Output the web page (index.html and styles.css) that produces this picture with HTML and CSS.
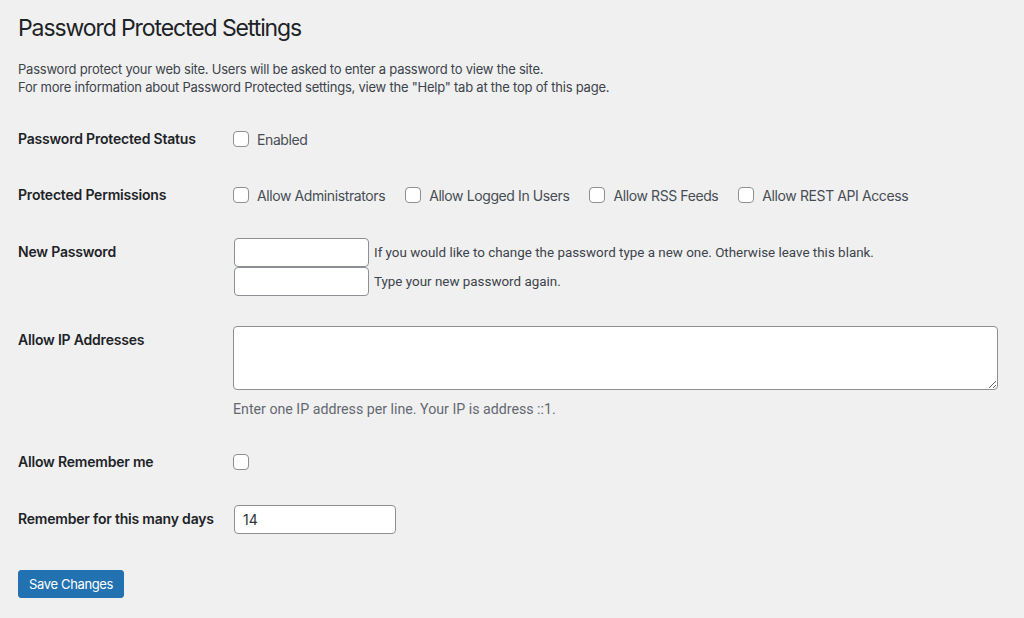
FILE: index.html
```html
<!DOCTYPE html>
<html lang="en">
<head>
<meta charset="utf-8">
<title>Password Protected Settings</title>
<link rel="stylesheet" href="styles.css">
</head>
<body>
<div class="wrap">
  <h1 class="page-title">Password Protected Settings</h1>
  <p class="intro">Password protect your web site. Users will be asked to enter a password to view the site.<br>For more information about Password Protected settings, view the "Help" tab at the top of this page.</p>

  <form class="settings">
    <div class="row row--check">
      <div class="row-label">Password Protected Status</div>
      <div class="row-field">
        <label class="check"><input type="checkbox" class="checkbox"><span>Enabled</span></label>
      </div>
    </div>

    <div class="row row--check">
      <div class="row-label">Protected Permissions</div>
      <div class="row-field checks">
        <label class="check"><input type="checkbox" class="checkbox"><span>Allow Administrators</span></label>
        <label class="check"><input type="checkbox" class="checkbox"><span>Allow Logged In Users</span></label>
        <label class="check"><input type="checkbox" class="checkbox"><span>Allow RSS Feeds</span></label>
        <label class="check"><input type="checkbox" class="checkbox"><span>Allow REST API Access</span></label>
      </div>
    </div>

    <div class="row">
      <div class="row-label">New Password</div>
      <div class="row-field stack">
        <div class="pass-line"><input type="password" class="text-input pass-input"><span class="hint">If you would like to change the password type a new one. Otherwise leave this blank.</span></div>
        <div class="pass-line"><input type="password" class="text-input pass-input"><span class="hint">Type your new password again.</span></div>
      </div>
    </div>

    <div class="row">
      <div class="row-label">Allow IP Addresses</div>
      <div class="row-field stack">
        <textarea class="ip-list"></textarea>
        <p class="description">Enter one IP address per line. Your IP is address ::1.</p>
      </div>
    </div>

    <div class="row row--check">
      <div class="row-label">Allow Remember me</div>
      <div class="row-field">
        <label class="check"><input type="checkbox" class="checkbox"></label>
      </div>
    </div>

    <div class="row">
      <div class="row-label">Remember for this many days</div>
      <div class="row-field">
        <input type="text" class="text-input days-input" value="14">
      </div>
    </div>

    <div class="actions">
      <button type="button" class="button-primary">Save Changes</button>
    </div>
  </form>
</div>
</body>
</html>
```

FILE: styles.css
```css
html, body {
  margin: 0;
  padding: 0;
  background: #f0f0f1;
}

body {
  font-family: Inter, "Open Sans", sans-serif;
  color: #1d2327;
  font-size: 13px;
}

.wrap {
  padding: 14px 18px 0;
}

.page-title {
  margin: 0;
  font-size: 23px;
  font-weight: 400;
  line-height: 29px;
  letter-spacing: -1.1px;
  color: #1d2327;
}

.intro {
  margin: 17px 0 0;
  font-size: 13px;
  line-height: 18px;
  letter-spacing: -0.23px;
  color: #3c434a;
}

.settings {
  display: flex;
  flex-direction: column;
  gap: 30px;
  margin-top: 30px;
}

.row {
  display: grid;
  grid-template-columns: 216px 1fr;
  align-items: start;
}

.row-label {
  font-size: 14px;
  font-weight: 600;
  line-height: 20px;
  letter-spacing: -0.2px;
  padding-top: 4px;
  color: #1d2327;
}

.row--check .row-label {
  padding-top: 3px;
}

.row-field {
  min-width: 0;
}

.checks {
  display: flex;
  gap: 21px;
}

.check {
  display: flex;
  align-items: center;
  height: 26px;
  gap: 8px;
  font-size: 14px;
  letter-spacing: -0.4px;
  color: #474d54;
}

.checkbox {
  appearance: none;
  -webkit-appearance: none;
  margin: 0;
  width: 16px;
  height: 16px;
  border: 1px solid #8c8f94;
  border-radius: 4px;
  background: #fff;
  box-sizing: border-box;
}

.checks .check:first-child .checkbox,
.row--check .row-field > .check .checkbox {
  margin-left: -1px;
}

.stack {
  display: flex;
  flex-direction: column;
}

.pass-line {
  display: flex;
  align-items: center;
  gap: 5px;
}

.text-input {
  box-sizing: border-box;
  height: 29px;
  margin: 0;
  padding: 0 8px;
  border: 1px solid #8c8f94;
  border-radius: 4px;
  background: #fff;
  font-family: inherit;
  font-size: 14px;
  color: #2c3338;
}

.pass-input {
  width: 135px;
}

.hint {
  font-family: Roboto, "Liberation Sans", sans-serif;
  font-size: 13.4px;
  color: #3c434a;
}

.ip-list {
  box-sizing: border-box;
  width: 765px;
  height: 64px;
  margin: 0 0 0 -1px;
  padding: 2px 6px;
  border: 1px solid #8c8f94;
  border-radius: 4px;
  background: #fff;
  font-family: inherit;
  font-size: 14px;
  display: block;
}

.description {
  margin: 9px 0 0 -1px;
  font-family: Roboto, "Liberation Sans", sans-serif;
  font-size: 14.2px;
  line-height: 20px;
  color: #646970;
}

.days-input {
  width: 162px;
}

.actions {
  margin-top: 6px;
}

.button-primary {
  box-sizing: border-box;
  height: 28px;
  padding: 0 10px;
  border: 1px solid #2271b1;
  border-radius: 3px;
  background: #2271b1;
  color: #fff;
  font-family: inherit;
  font-size: 13px;
  letter-spacing: -0.35px;
  line-height: 26px;
  cursor: pointer;
}
```
